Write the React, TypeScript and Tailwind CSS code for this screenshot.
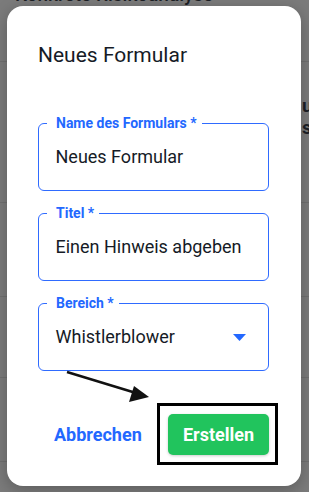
function Field({ label, value, select = false }: { label: string; value: string; select?: boolean }) {
  return (
    <div className="relative flex h-[68px] items-center justify-between rounded-[6px] border-[1.5px] border-[#2f6bff] pl-[16.5px] pr-[22px]">
      <span className="absolute -top-[9px] left-[8px] bg-white pl-[9px] pr-[5px] text-[14px] font-bold leading-[16px] text-[#2368ff]">
        {label}
      </span>
      <span className="text-[18px] leading-[24px] text-[#161b26]">{value}</span>
      {select && (
        <svg width="13" height="7" viewBox="0 0 13 7">
          <path d="M0 0 L13 0 L6.5 7 Z" fill="#2368ff" />
        </svg>
      )}
    </div>
  )
}

export default function App() {
  return (
    <div className="relative h-[492px] w-[309px] overflow-hidden bg-[#7b7b7b] font-['Roboto','Liberation_Sans',sans-serif]">
      {/* Background page behind the overlay */}
      <div className="flex flex-col">
        <div className="h-[62px] border-b border-[#6f6f6f] pl-[15px]">
          <div className="-mt-[16px] text-[19px] font-medium leading-[22px] text-[#1c1f26]">Konkrete Risikoanalyse -</div>
        </div>
        <div className="h-[141px] border-b border-[#6f6f6f] pl-[302px] pt-[33px] text-[19px] font-bold leading-[22px] text-[#1c1f26]">
          <div>u</div>
          <div>s</div>
        </div>
        <div className="h-[94px] border-b border-[#6f6f6f]" />
        <div className="h-[81px] border-b border-[#6f6f6f]" />
        <div className="h-[84px] border-b border-[#6f6f6f]" />
      </div>

      {/* Dialog */}
      <div className="absolute left-[7px] top-[6px] flex h-[480px] w-[294px] flex-col rounded-[16px] bg-white pl-[31px] pr-[32px] shadow-[0_4px_16px_rgba(0,0,0,0.25)]">
        <h2 className="mt-[36px] text-[21px] font-normal leading-[26px] text-[#161b26]">Neues Formular</h2>
        <div className="mt-[55px] flex flex-col gap-[22px]">
          <Field label="Name des Formulars *" value="Neues Formular" />
          <Field label="Titel *" value="Einen Hinweis abgeben" />
          <Field label="Bereich *" value="Whistlerblower" select />
        </div>
        <div className="mt-[32px] flex items-center justify-between pl-[16px]">
          <button className="text-[18px] font-bold text-[#2368ff]">Abbrechen</button>
          <div className="-mr-[9px] border-[3px] border-black pb-[7px] pl-[8px] pr-[6px] pt-[8px]">
            <button className="flex h-[41px] w-[101px] items-center justify-center rounded-[5px] bg-[#21c45d] text-[18px] font-bold text-white shadow-[0_1px_3px_rgba(0,0,0,0.2)]">
              Erstellen
            </button>
          </div>
        </div>
      </div>

      {/* Annotation arrow */}
      <svg className="absolute left-0 top-0" width="309" height="492" viewBox="0 0 309 492">
        <line x1="67" y1="372" x2="136" y2="393" stroke="#111" strokeWidth="2.5" />
        <path d="M149 397 L129 402 L134 386 Z" fill="#111" />
      </svg>
    </div>
  )
}
